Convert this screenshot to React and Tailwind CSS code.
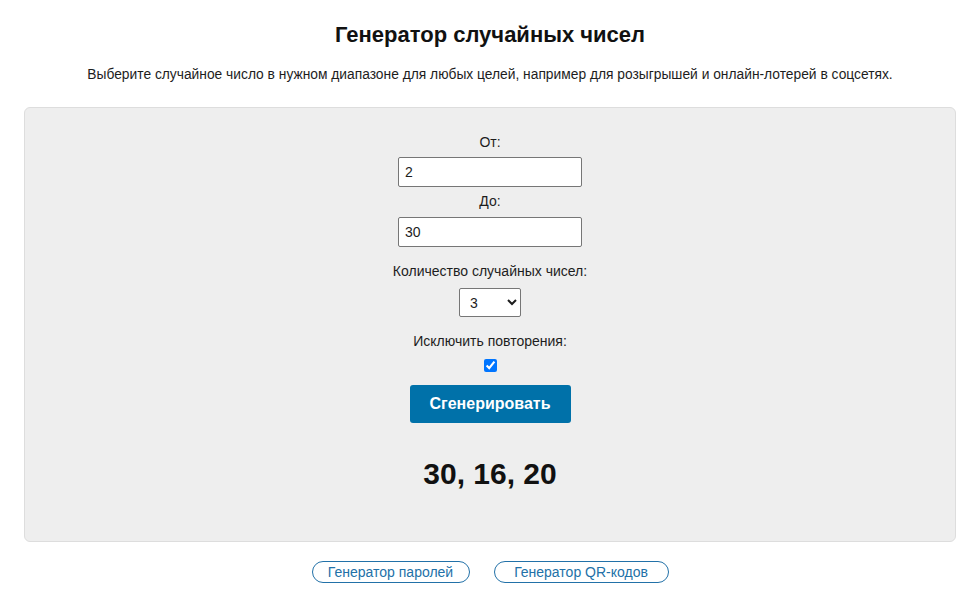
import React, { useState } from 'react';

const App = () => {
  const [from, setFrom] = useState('2');
  const [to, setTo] = useState('30');
  const [count, setCount] = useState('3');
  const [unique, setUnique] = useState(true);

  return (
    <div className="min-h-screen bg-white font-['Liberation_Sans',Arial,sans-serif] text-[#1d1d1d] px-6">
      <h1 className="pt-[22px] text-center text-[22px] leading-[26px] font-bold text-[#111]">
        Генератор случайных чисел
      </h1>
      <p className="mt-[19px] text-center text-[13.8px] leading-[16px]">
        Выберите случайное число в нужном диапазоне для любых целей, например для розыгрышей и онлайн-лотерей в соцсетях.
      </p>

      {/* Main panel */}
      <div className="mt-[24px] bg-[#eeeeee] border border-[#dddddd] rounded-[6px] pt-[26px] pb-[50px] flex flex-col items-center text-[14px]">
        <label className="leading-[16px]">От:</label>
        <input
          value={from}
          onChange={(e) => setFrom(e.target.value)}
          className="mt-[7px] w-[184px] h-[30px] px-[6px] bg-white border border-[#767676] rounded-[2px] text-[14px] outline-none"
        />
        <label className="mt-[6px] leading-[16px]">До:</label>
        <input
          value={to}
          onChange={(e) => setTo(e.target.value)}
          className="mt-[8px] w-[184px] h-[30px] px-[6px] bg-white border border-[#767676] rounded-[2px] text-[14px] outline-none"
        />
        <label className="mt-[16px] leading-[16px]">Количество случайных чисел:</label>
        <select
          value={count}
          onChange={(e) => setCount(e.target.value)}
          className="mt-[9px] w-[62px] h-[29px] pl-[6px] bg-white border border-[#767676] rounded-[2px] text-[14px]"
        >
          {[1, 2, 3, 4, 5, 6, 7, 8, 9, 10].map((n) => (
            <option key={n} value={n}>{n}</option>
          ))}
        </select>
        <label className="mt-[16px] leading-[16px]">Исключить повторения:</label>
        <input
          type="checkbox"
          checked={unique}
          onChange={(e) => setUnique(e.target.checked)}
          className="mt-[10px] w-[13px] h-[13px]"
        />
        <button className="mt-[13px] w-[161px] h-[38px] bg-[#0071a9] rounded-[3px] text-white text-[16px] font-bold">
          Сгенерировать
        </button>
        <div className="mt-[34px] text-[30px] leading-[34px] font-bold text-[#111]">30, 16, 20</div>
      </div>

      {/* Links */}
      <div className="mt-[19px] flex justify-center gap-[24px] text-[14px]">
        <a className="h-[22px] w-[158px] flex items-center justify-center border border-[#2271a8] rounded-full text-[#2271a8] leading-none">
          Генератор паролей
        </a>
        <a className="h-[22px] w-[175px] flex items-center justify-center border border-[#2271a8] rounded-full text-[#2271a8] leading-none">
          Генератор QR-кодов
        </a>
      </div>
    </div>
  );
};

export default App;
